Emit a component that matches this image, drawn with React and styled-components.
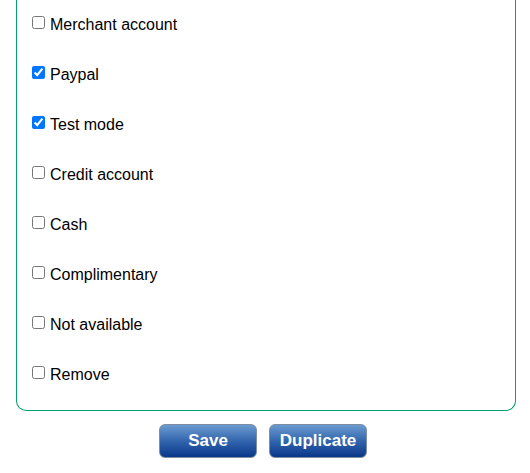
import React from 'react';
import styled, { createGlobalStyle } from 'styled-components'

const GlobalStyle = createGlobalStyle`
  body {
    margin: 0;
    background-color: white;
    font-family: "Liberation Sans", Arial, sans-serif;
  }
`

const Page = styled.div`
  width: 530px;
  height: 473px;
  overflow: hidden;
`

const Panel = styled.div`
  margin-left: 16px;
  padding: 0 0 10px 12px;
  box-sizing: border-box;
  width: 500px;
  border: 1px solid #00a070;
  border-top: none;
  border-radius: 0 0 10px 10px;
`

const Row = styled.label`
  display: block;
  height: 50px;
  padding-top: 13px;
  box-sizing: border-box;
  font-size: 16px;
  line-height: 18px;
  color: black;
`

const Check = styled.input`
  margin: 3px 5px 3px 3px;
  vertical-align: 1px;
`

const ButtonBar = styled.div`
  display: flex;
  justify-content: center;
  gap: 12px;
  margin-top: 13px;
  padding-right: 4px;
`

const Button = styled.button`
  width: 98px;
  height: 34px;
  border: 1px solid #7f8fa0;
  border-radius: 6px;
  background: linear-gradient(to bottom, #6a9bd0 0%, #2e60aa 55%, #0a3889 100%);
  color: white;
  font-family: "Liberation Sans", Arial, sans-serif;
  font-weight: bold;
  font-size: 17px;
  padding: 0;
  cursor: pointer;
`

const opcoes = [
  { nome: 'Merchant account', marcado: false },
  { nome: 'Paypal', marcado: true },
  { nome: 'Test mode', marcado: true },
  { nome: 'Credit account', marcado: false },
  { nome: 'Cash', marcado: false },
  { nome: 'Complimentary', marcado: false },
  { nome: 'Not available', marcado: false },
  { nome: 'Remove', marcado: false }
]

export default function App() {
  const linhas = opcoes.map((op) => {
    return (
      <Row key={op.nome}>
        <Check type="checkbox" defaultChecked={op.marcado} />{op.nome}
      </Row>
    )
  })

  return (
    <Page>
      <GlobalStyle />
      <Panel>
        {linhas}
      </Panel>
      <ButtonBar>
        <Button type="submit">Save</Button>
        <Button type="button">Duplicate</Button>
      </ButtonBar>
    </Page>
  )
}
